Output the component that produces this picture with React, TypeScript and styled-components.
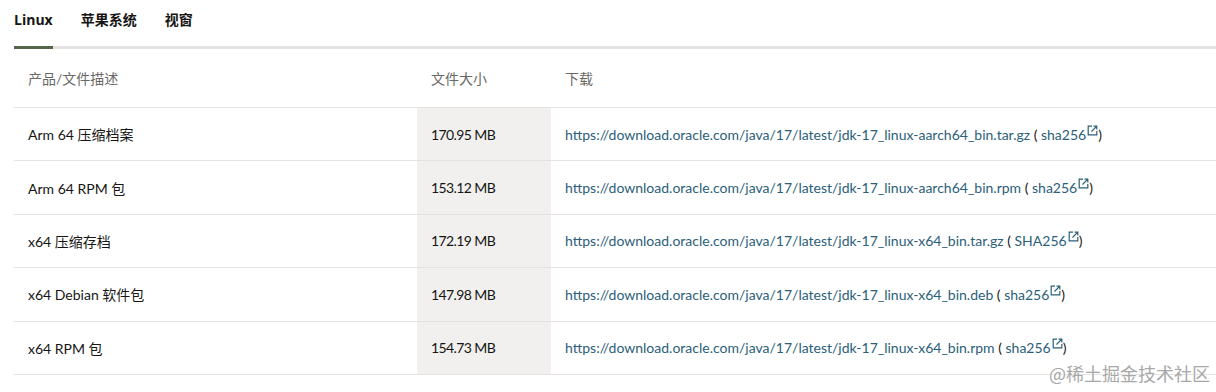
import React from "react";
import styled, { createGlobalStyle } from "styled-components";

const Global = createGlobalStyle`
  html, body { margin: 0; padding: 0; background: #fff; }
  body { font-family: Lato, "Noto Sans CJK SC", sans-serif; color: #161513; }
`;

const Page = styled.div`
  position: relative;
  width: 1216px;
  height: 392px;
  padding-left: 14px;
  box-sizing: border-box;
  overflow: hidden;
`;

const Tabs = styled.div`
  display: flex;
  gap: 28px;
  border-bottom: 3px solid #e4e3e1;
  height: 49px;
  box-sizing: border-box;
`;

const Tab = styled.div<{ $active?: boolean }>`
  font-family: "Open Sans", "Noto Sans CJK SC", sans-serif;
  font-size: 14px;
  font-weight: 700;
  color: #161513;
  padding-top: 10px;
  line-height: 20px;
  height: 46px;
  box-sizing: border-box;
  position: relative;
  &::after {
    content: "";
    display: ${(p) => (p.$active ? "block" : "none")};
    position: absolute;
    left: 0;
    right: 0;
    bottom: -3px;
    height: 3px;
    background: #55654a;
  }
`;

const Table = styled.div`
  display: grid;
  grid-template-columns: 403px 134px 1fr;
`;

const HeadCell = styled.div`
  height: 58px;
  display: flex;
  align-items: center;
  padding-left: 14px;
  font-size: 14px;
  color: #6a6866;
  border-bottom: 1px solid #e4e3e1;
`;

const Cell = styled.div<{ $shade?: boolean }>`
  height: 53.4px;
  box-sizing: border-box;
  display: flex;
  align-items: center;
  padding-left: 14px;
  font-size: 14px;
  color: #161513;
  border-bottom: 1px solid #e4e3e1;
  background: ${(p) => (p.$shade ? "#f1f0ee" : "transparent")};
  letter-spacing: ${(p) => (p.$shade ? "-0.6px" : "normal")};
  white-space: nowrap;
`;

const Link = styled.a`
  color: #2b6079;
  text-decoration: none;
`;

const Ext = styled.svg`
  width: 11px;
  height: 11px;
  margin-left: 1px;
  position: relative;
  top: -4px;
`;

const Watermark = styled.div`
  position: absolute;
  right: 6px;
  bottom: 6px;
  font-size: 18px;
  color: #a8a8a8;
  font-family: "Noto Sans CJK SC", sans-serif;
  text-shadow: 0 0 2px #fff, 0 0 1px #fff;
`;

const rows = [
  ["Arm 64 压缩档案", "170.95 MB", "https://download.oracle.com/java/17/latest/jdk-17_linux-aarch64_bin.tar.gz", "sha256"],
  ["Arm 64 RPM 包", "153.12 MB", "https://download.oracle.com/java/17/latest/jdk-17_linux-aarch64_bin.rpm", "sha256"],
  ["x64 压缩存档", "172.19 MB", "https://download.oracle.com/java/17/latest/jdk-17_linux-x64_bin.tar.gz", "SHA256"],
  ["x64 Debian 软件包", "147.98 MB", "https://download.oracle.com/java/17/latest/jdk-17_linux-x64_bin.deb", "sha256"],
  ["x64 RPM 包", "154.73 MB", "https://download.oracle.com/java/17/latest/jdk-17_linux-x64_bin.rpm", "sha256"],
];

const ExtIcon = () => (
  <Ext viewBox="0 0 11 11" fill="none" stroke="#2b6079" strokeWidth="1.2">
    <path d="M5 1.2H1.2v8.6h8.6V6" />
    <path d="M4.5 6.5L9.8 1.2M6.5 1.2h3.3v3.3" />
  </Ext>
);

export default function App() {
  return (
    <>
      <Global />
      <Page>
        <Tabs>
          <Tab $active>Linux</Tab>
          <Tab>苹果系统</Tab>
          <Tab>视窗</Tab>
        </Tabs>
        <Table>
          <HeadCell>产品/文件描述</HeadCell>
          <HeadCell>文件大小</HeadCell>
          <HeadCell>下载</HeadCell>
          {rows.map((r) => (
            <React.Fragment key={r[2]}>
              <Cell>{r[0]}</Cell>
              <Cell $shade>{r[1]}</Cell>
              <Cell>
                <Link href="#">{r[2]}</Link>
                &nbsp;(&nbsp;
                <Link href="#">{r[3]}</Link>
                <ExtIcon />)
              </Cell>
            </React.Fragment>
          ))}
        </Table>
        <Watermark>@稀土掘金技术社区</Watermark>
      </Page>
    </>
  );
}
